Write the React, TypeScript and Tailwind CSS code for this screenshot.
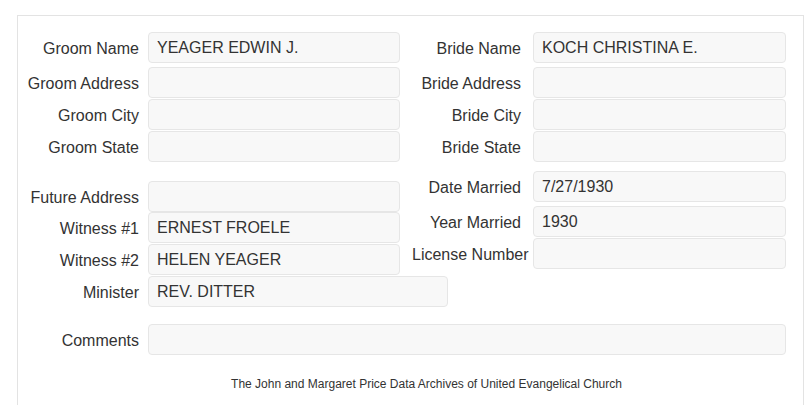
import React from 'react'

type FieldProps = {
  label: string
  value?: string
  labelW: string
  inputW: string
  gap: string
  className?: string
}

// Un renglón del formulario: etiqueta a la derecha + campo de sólo lectura
const Field = ({ label, value = '', labelW, inputW, gap, className = '' }: FieldProps) => (
  <div className={`flex items-center ${className}`}>
    <label className={`${labelW} shrink-0 text-right whitespace-nowrap pt-[2px] leading-[20px]`}>
      {label}
    </label>
    <input
      readOnly
      value={value}
      className={`${gap} ${inputW} h-[31px] shrink-0 rounded-[4px] border border-[#e6e6e6] bg-[#f8f8f8] px-[8px] text-[16px] text-[#333] outline-none`}
    />
  </div>
)

const L = { labelW: 'w-[121px]', inputW: 'w-[252px]', gap: 'ml-[9px]' }
const R = { labelW: 'w-[109px]', inputW: 'w-[253px]', gap: 'ml-[12px]' }

export default function App() {
  return (
    <div className="min-h-[405px] bg-white font-['Liberation_Sans',Arial,sans-serif] text-[16px] text-[#333]">
      <div className="ml-[17px] mt-[15px] h-[390px] w-[787px] border border-b-0 border-[#e3e3e3] pt-[16px]">
        {/* Datos del novio y la novia */}
        <div className="flex">
          <div className="w-[394px] shrink-0">
            <Field {...L} label="Groom Name" value="YEAGER EDWIN J." />
            <Field {...L} label="Groom Address" className="mt-[4px]" />
            <Field {...L} label="Groom City" className="mt-[1px]" />
            <Field {...L} label="Groom State" className="mt-[1px]" />
          </div>
          <div>
            <Field {...R} label="Bride Name" value="KOCH CHRISTINA E." />
            <Field {...R} label="Bride Address" className="mt-[4px]" />
            <Field {...R} label="Bride City" className="mt-[1px]" />
            <Field {...R} label="Bride State" className="mt-[1px]" />
          </div>
        </div>

        {/* Boda */}
        <div className="flex items-start">
          <div className="w-[394px] shrink-0 pt-[19px]">
            <Field {...L} label="Future Address" />
            <Field {...L} label="Witness #1" value="ERNEST FROELE" />
            <Field {...L} label="Witness #2" value="HELEN YEAGER" className="mt-[1px]" />
            <Field {...L} inputW="w-[300px]" label="Minister" value="REV. DITTER" className="mt-[1px]" />
          </div>
          <div className="pt-[9px]">
            <Field {...R} label="Date Married" value="7/27/1930" />
            <Field {...R} label="Year Married" value="1930" className="mt-[4px]" />
            <Field {...R} label="License Number" className="mt-[1px]" />
          </div>
        </div>

        <Field {...L} inputW="w-[638px]" label="Comments" className="mt-[17px]" />

        <p className="mt-[21px] pl-[32px] text-center text-[12px] leading-[17px] text-[#333]">
          The John and Margaret Price Data Archives of United Evangelical Church
        </p>
      </div>
    </div>
  )
}
